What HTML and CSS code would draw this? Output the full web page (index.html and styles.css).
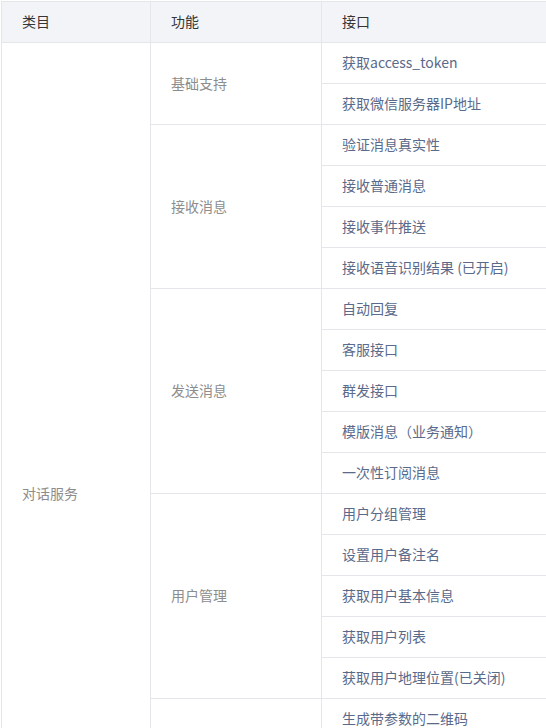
FILE: index.html
```html
<!DOCTYPE html>
<html lang="zh-CN">
<head>
    <meta charset="UTF-8">
    <meta name="viewport" content="width=device-width, initial-scale=1.0">
    <title>接口权限</title>
    <link rel="stylesheet" href="styles.css">
</head>
<body>
    <table class="api-table">
        <colgroup>
            <col class="col-cat">
            <col class="col-func">
            <col class="col-api">
        </colgroup>
        <thead>
            <tr>
                <th>类目</th>
                <th>功能</th>
                <th>接口</th>
            </tr>
        </thead>
        <tbody>
            <tr>
                <td class="cat" rowspan="22">对话服务</td>
                <td class="func" rowspan="2">基础支持</td>
                <td class="api">获取access_token</td>
            </tr>
            <tr><td class="api">获取微信服务器IP地址</td></tr>
            <tr>
                <td class="func" rowspan="4">接收消息</td>
                <td class="api">验证消息真实性</td>
            </tr>
            <tr><td class="api">接收普通消息</td></tr>
            <tr><td class="api">接收事件推送</td></tr>
            <tr><td class="api">接收语音识别结果 (已开启)</td></tr>
            <tr>
                <td class="func" rowspan="5">发送消息</td>
                <td class="api">自动回复</td>
            </tr>
            <tr><td class="api">客服接口</td></tr>
            <tr><td class="api">群发接口</td></tr>
            <tr><td class="api">模版消息（业务通知）</td></tr>
            <tr><td class="api">一次性订阅消息</td></tr>
            <tr>
                <td class="func" rowspan="5">用户管理</td>
                <td class="api">用户分组管理</td>
            </tr>
            <tr><td class="api">设置用户备注名</td></tr>
            <tr><td class="api">获取用户基本信息</td></tr>
            <tr><td class="api">获取用户列表</td></tr>
            <tr><td class="api">获取用户地理位置(已关闭)</td></tr>
            <tr>
                <td class="func" rowspan="2">推广支持</td>
                <td class="api">生成带参数的二维码</td>
            </tr>
            <tr><td class="api">长链接转短链接接口</td></tr>
            <tr>
                <td class="func">界面丰富</td>
                <td class="api">自定义菜单</td>
            </tr>
            <tr>
                <td class="func" rowspan="2">素材管理</td>
                <td class="api">素材管理接口</td>
            </tr>
            <tr><td class="api">图文消息留言管理</td></tr>
            <tr>
                <td class="func">智能接口</td>
                <td class="api">语义理解接口</td>
            </tr>
        </tbody>
    </table>
</body>
</html>
```

FILE: styles.css
```css
html, body {
    margin: 0;
    padding: 0;
    background: #fff;
    overflow: hidden;
}
body {
    padding: 1px 0 0 1px;
    font-family: "Microsoft YaHei", "Noto Sans CJK SC", "Noto Sans", sans-serif;
    font-size: 14px;
}
.api-table {
    width: 570px;
    border-collapse: collapse;
    table-layout: fixed;
}
.col-cat {
    width: 149px;
}
.col-func {
    width: 171px;
}
.api-table th,
.api-table td {
    border: 1px solid #e4e6ea;
    text-align: left;
    padding: 0 20px 2px;
    height: 38px;
    line-height: 20px;
    font-weight: normal;
}
.api-table th {
    background-color: #f2f4f8;
    color: #353535;
}
.cat,
.func {
    color: #8d8d8d;
}
.api {
    color: #5a6a8a;
}
```
